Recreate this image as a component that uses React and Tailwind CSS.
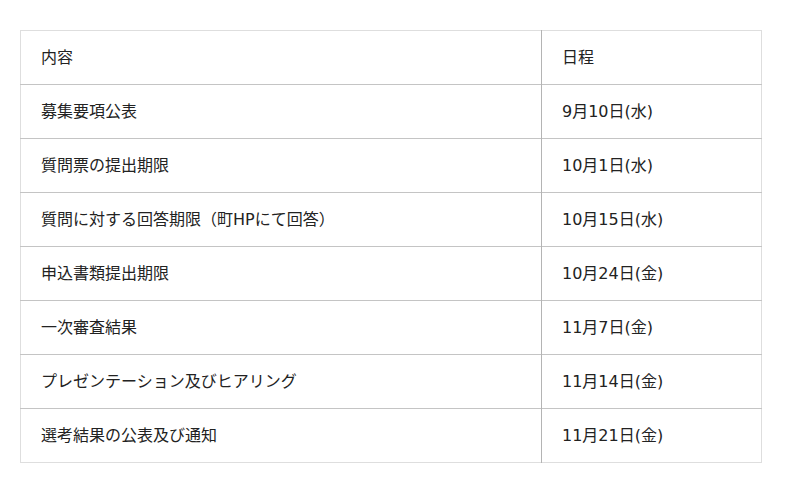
const rows = [
  ["内容", "日程"],
  ["募集要項公表", "9月10日(水)"],
  ["質問票の提出期限", "10月1日(水)"],
  ["質問に対する回答期限（町HPにて回答）", "10月15日(水)"],
  ["申込書類提出期限", "10月24日(金)"],
  ["一次審査結果", "11月7日(金)"],
  ["プレゼンテーション及びヒアリング", "11月14日(金)"],
  ["選考結果の公表及び通知", "11月21日(金)"],
]

export default function App() {
  return (
    <div
      className="w-[800px] h-[493px] bg-white pt-[30px] px-[20px] text-[16px] text-[#222]"
      style={{ fontFamily: '"DejaVu Sans", "Noto Sans CJK JP", sans-serif' }}
    >
      <table className="w-[742px] border-collapse border border-[#dedede]">
        <tbody>
          {rows.map((r, i) => (
            <tr
              key={i}
              className={i < rows.length - 1 ? "border-b border-[#c4c4c4]" : ""}
            >
              <td className="w-[521px] h-[54px] px-[20px] border-r border-[#b4b4b4]">
                {r[0]}
              </td>
              <td className="h-[54px] px-[20px]">{r[1]}</td>
            </tr>
          ))}
        </tbody>
      </table>
    </div>
  )
}
